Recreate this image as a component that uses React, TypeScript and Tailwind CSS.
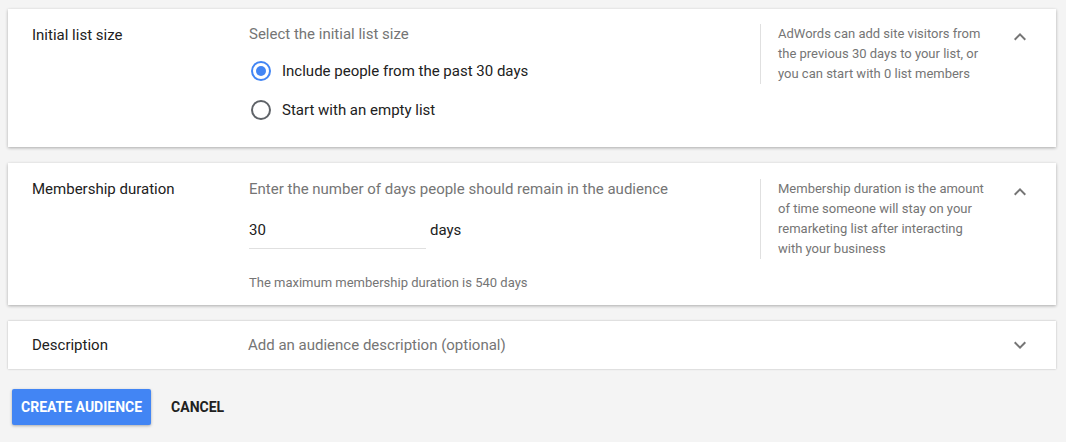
import React from 'react';

const Chevron = ({ up }: { up: boolean }) => (
  <svg width="24" height="24" viewBox="0 0 24 24" className="shrink-0 text-[#757575]">
    {up ? (
      <path d="M12 8l-6 6 1.41 1.41L12 10.83l4.59 4.58L18 14z" fill="currentColor" />
    ) : (
      <path d="M16.59 8.59L12 13.17 7.41 8.59 6 10l6 6 6-6z" fill="currentColor" />
    )}
  </svg>
);

const Radio = ({ checked, label }: { checked: boolean; label: string }) => (
  <div className="flex h-6 items-center">
    <span
      className={
        checked
          ? 'flex h-5 w-5 items-center justify-center rounded-full border-2 border-[#4285f4]'
          : 'flex h-5 w-5 items-center justify-center rounded-full border-2 border-[#5f6368]'
      }
    >
      {checked && <span className="h-[10px] w-[10px] rounded-full bg-[#4285f4]" />}
    </span>
    <span className="ml-[11px] text-[15px] text-[#212121]">{label}</span>
  </div>
);

const Helper = ({ lines }: { lines: string }) => (
  <div className="w-[248px] shrink-0">
    <div className="border-l border-[#e0e0e0] pl-[17px]">
      <p className="w-[212px] text-[13px] leading-5 text-[#757575]">{lines}</p>
    </div>
  </div>
);

export default function App() {
  return (
    <div
      className="min-h-[442px] bg-[#f4f4f4] pt-[9px] pl-2 pr-[10px]"
      style={{ fontFamily: 'Roboto, "Noto Sans", sans-serif' }}
    >
      <div className="flex h-[138px] bg-white pl-6 pr-6 pt-[15px] shadow-[0_1px_3px_rgba(0,0,0,0.3)]">
        <div className="w-[217px] shrink-0 text-[15px] leading-5 text-[#212121] pt-px">Initial list size</div>
        <div className="flex-1">
          <div className="text-[15px] leading-5 text-[#757575]">Select the initial list size</div>
          <div className="mt-[15px] ml-[2px] flex flex-col gap-[15px]">
            <Radio checked label="Include people from the past 30 days" />
            <Radio checked={false} label="Start with an empty list" />
          </div>
        </div>
        <Helper lines="AdWords can add site visitors from the previous 30 days to your list, or you can start with 0 list members" />
        <div className="pt-[1px]">
          <Chevron up />
        </div>
      </div>

      <div className="mt-4 flex h-[142px] bg-white pl-6 pr-6 pt-4 shadow-[0_1px_3px_rgba(0,0,0,0.3)]">
        <div className="w-[217px] shrink-0 text-[15px] leading-5 text-[#212121]">Membership duration</div>
        <div className="flex-1">
          <div className="text-[15px] leading-5 text-[#757575]">
            Enter the number of days people should remain in the audience
          </div>
          <div className="mt-[21px] flex items-start">
            <div className="w-[177px] border-b border-[#e0e0e0] pb-[8px] text-[15px] leading-5 text-[#212121]">30</div>
            <span className="ml-1 text-[15px] leading-5 text-[#212121]">days</span>
          </div>
          <div className="mt-[24px] text-[13px] leading-5 text-[#757575]">
            The maximum membership duration is 540 days
          </div>
        </div>
        <Helper lines="Membership duration is the amount of time someone will stay on your remarketing list after interacting with your business" />
        <div className="pt-px">
          <Chevron up />
        </div>
      </div>

      <div className="mt-4 flex h-12 items-center bg-white pl-6 pr-6 shadow-[0_0_2px_rgba(0,0,0,0.25)]">
        <div className="w-[216px] shrink-0 text-[15px] leading-5 text-[#212121]">Description</div>
        <div className="flex-1 text-[15px] leading-5 text-[#757575]">Add an audience description (optional)</div>
        <Chevron up={false} />
      </div>

      <div className="mt-5 flex items-center pl-1">
        <button className="h-9 rounded-[2px] bg-[#4285f4] px-[9px] text-[14px] font-bold uppercase text-white shadow-[0_1px_3px_rgba(0,0,0,0.3)]">
          Create audience
        </button>
        <button className="ml-3 h-9 px-2 text-[14px] font-bold uppercase text-[#212121]">Cancel</button>
      </div>
    </div>
  );
}
